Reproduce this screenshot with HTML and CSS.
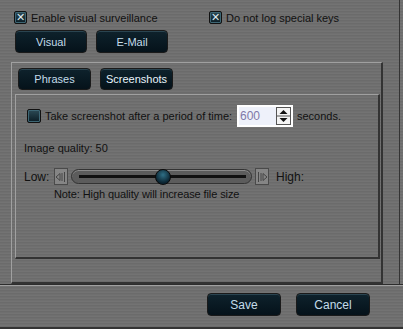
FILE: index.html
```html
<!DOCTYPE html>
<html lang="en">
<head>
    <meta charset="UTF-8">
    <title>Surveillance settings</title>
    <link rel="stylesheet" href="styles.css">
</head>
<body>

<div class="window">
    <div class="main">
        <!-- top options -->
        <div class="options">
            <label class="check-label first"><span class="check checked">&#10005;</span>Enable visual surveillance</label>
            <label class="check-label"><span class="check checked">&#10005;</span>Do not log special keys</label>
        </div>

        <div class="button-row">
            <button class="dark-button">Visual</button>
            <button class="dark-button">E-Mail</button>
        </div>

        <!-- group frame -->
        <div class="group">
            <div class="tabs">
                <button class="dark-button tab">Phrases</button>
                <button class="dark-button tab active">Screenshots</button>
            </div>

            <div class="panel">
                <div class="shot-row">
                    <span class="check"></span>
                    <span class="shot-text">Take screenshot after a period of time:</span>
                    <div class="spin-box">
                        <span class="spin-value">600</span>
                        <span class="spin-buttons">
                            <svg width="15" height="18" viewBox="0 0 15 18">
                                <rect x="0.5" y="0.5" width="14" height="17" fill="#f4f4f4" stroke="#555"/>
                                <line x1="1" y1="9" x2="14" y2="9" stroke="#555"/>
                                <polygon points="7.5,3 3.5,7 11.5,7" fill="#111"/>
                                <polygon points="7.5,15 3.5,11 11.5,11" fill="#111"/>
                            </svg>
                        </span>
                    </div>
                    <span class="seconds">seconds.</span>
                </div>

                <div class="quality">Image quality: 50</div>

                <div class="slider-row">
                    <span class="low">Low:</span>
                    <div class="slider">
                        <span class="slide-btn">
                            <svg width="12" height="14" viewBox="0 0 12 14">
                                <polygon points="1,7 5,3.5 5,10.5" fill="none" stroke="#444"/>
                                <line x1="7" y1="3" x2="7" y2="11" stroke="#444"/>
                                <line x1="9.5" y1="2" x2="9.5" y2="12" stroke="#444"/>
                            </svg>
                        </span>
                        <div class="track">
                            <div class="groove"></div>
                            <span class="thumb"></span>
                        </div>
                        <span class="slide-btn">
                            <svg width="12" height="14" viewBox="0 0 12 14">
                                <line x1="2.5" y1="2" x2="2.5" y2="12" stroke="#444"/>
                                <line x1="5" y1="3" x2="5" y2="11" stroke="#444"/>
                                <polygon points="11,7 7,3.5 7,10.5" fill="none" stroke="#444"/>
                            </svg>
                        </span>
                    </div>
                    <span class="high">High:</span>
                </div>

                <div class="note">Note: High quality will increase file size</div>
            </div>
        </div>
    </div>

    <!-- bottom buttons -->
    <div class="footer">
        <button class="dark-button wide">Save</button>
        <button class="dark-button wide">Cancel</button>
    </div>
</div>

</body>
</html>
```

FILE: styles.css
```css
body {
    margin: 0;
    width: 403px;
    height: 329px;
    overflow: hidden;
    font-family: "Liberation Sans", Arial, sans-serif;
    font-size: 11px;
    color: #111;
    background: repeating-linear-gradient(to bottom, #6f6f6f 0px, #6f6f6f 1px, #737373 1px, #737373 2px, #6b6b6b 2px, #6b6b6b 3px);
}

.window {
    height: 329px;
    display: flex;
    flex-direction: column;
}

.main {
    width: 400px;
    height: 284px;
    border-right: 1px solid #333;
    box-sizing: border-box;
}

/* top checkboxes */
.options {
    display: flex;
    padding: 11px 0 0 14px;
    height: 13px;
}

.check-label {
    display: flex;
    align-items: center;
    height: 13px;
}

.check-label.first {
    width: 195px;
}

.check {
    display: inline-block;
    width: 13px;
    height: 13px;
    box-sizing: border-box;
    margin-right: 4px;
    border: 1px solid #111;
    border-radius: 2px;
    background: linear-gradient(#2c4a55, #0b1c24);
    box-shadow: inset 0 0 0 1px #3d6674;
    color: #dfe9ee;
    font-size: 11px;
    line-height: 11px;
    text-align: center;
}

.button-row {
    display: flex;
    gap: 9px;
    padding: 6px 0 0 15px;
}

.dark-button {
    width: 72px;
    height: 23px;
    padding: 0;
    font-family: "Liberation Sans", Arial, sans-serif;
    font-size: 11px;
    color: #c4dcea;
    background: linear-gradient(#0e222c, #05121a);
    border: 1px solid #1a1a1a;
    border-radius: 4px;
    box-shadow: inset 0 1px 0 #2a4450;
}

/* group frame */
.group {
    margin: 9px 0 0 11px;
    width: 372px;
    height: 222px;
    box-sizing: border-box;
    border-left: 1px solid #a0a0a0;
    border-top: 1px solid #a0a0a0;
    border-right: 2px solid #333;
    border-bottom: 2px solid #333;
}

.tabs {
    display: flex;
    gap: 9px;
    padding: 5px 0 0 6px;
}

.tab {
    width: 73px;
    height: 22px;
}

.tab.active {
    color: #e8f4fb;
}

.panel {
    margin: 4px 0 0 3px;
    width: 365px;
    height: 165px;
    box-sizing: border-box;
    border-left: 1px solid #a0a0a0;
    border-top: 1px solid #a0a0a0;
    border-right: 2px solid #333;
    border-bottom: 2px solid #333;
    padding: 10px 0 0 11px;
}

.shot-row {
    display: flex;
    align-items: center;
    height: 22px;
}

.shot-row .check {
    width: 14px;
    height: 14px;
}

.shot-text {
    width: 192px;
}

.spin-box {
    display: flex;
    align-items: center;
    justify-content: space-between;
    width: 56px;
    height: 22px;
    box-sizing: border-box;
    background: #eef1fa;
    border: 2px solid #fff;
    padding-left: 1px;
}

.spin-value {
    color: #8078a8;
    font-size: 12px;
}

.spin-buttons {
    display: flex;
}

.seconds {
    margin-left: 4px;
}

.quality {
    margin: 15px 0 0 -3px;
    height: 14px;
}

.slider-row {
    display: flex;
    align-items: center;
    margin: 12px 0 0 -3px;
    height: 17px;
}

.low {
    width: 30px;
    font-size: 12px;
}

.slider {
    display: flex;
    align-items: center;
}

.slide-btn {
    display: flex;
    align-items: center;
    justify-content: center;
    width: 14px;
    height: 17px;
    box-sizing: border-box;
    border: 1px solid #4a4a4a;
    background: #858585;
}

.track {
    position: relative;
    width: 181px;
    height: 15px;
    margin: 0 3px;
    box-sizing: border-box;
    border: 1px solid #333;
    border-radius: 8px;
    background: #5c5c5c;
    box-shadow: inset 0 1px 0 #8a8a8a;
}

.groove {
    position: absolute;
    left: 7px;
    right: 5px;
    top: 5px;
    height: 3px;
    background: #111;
}

.thumb {
    position: absolute;
    left: 83px;
    top: -1px;
    width: 14px;
    height: 14px;
    border-radius: 50%;
    background: radial-gradient(circle at 50% 35%, #2f6f86, #0a2330 70%);
    border: 1px solid #0a0a0a;
}

.high {
    margin-left: 7px;
    font-size: 12px;
}

.note {
    margin: 3px 0 0 27px;
    letter-spacing: -0.1px;
}

/* bottom area */
.footer {
    flex: 1;
    display: flex;
    gap: 15px;
    padding: 8px 0 0 207px;
    border-top: 1px solid #2d2d2d;
    box-shadow: inset 0 1px 0 #a0a0a0;
    border-bottom: 2px solid #333;
}

.dark-button.wide {
    width: 74px;
    font-size: 12px;
}
```
